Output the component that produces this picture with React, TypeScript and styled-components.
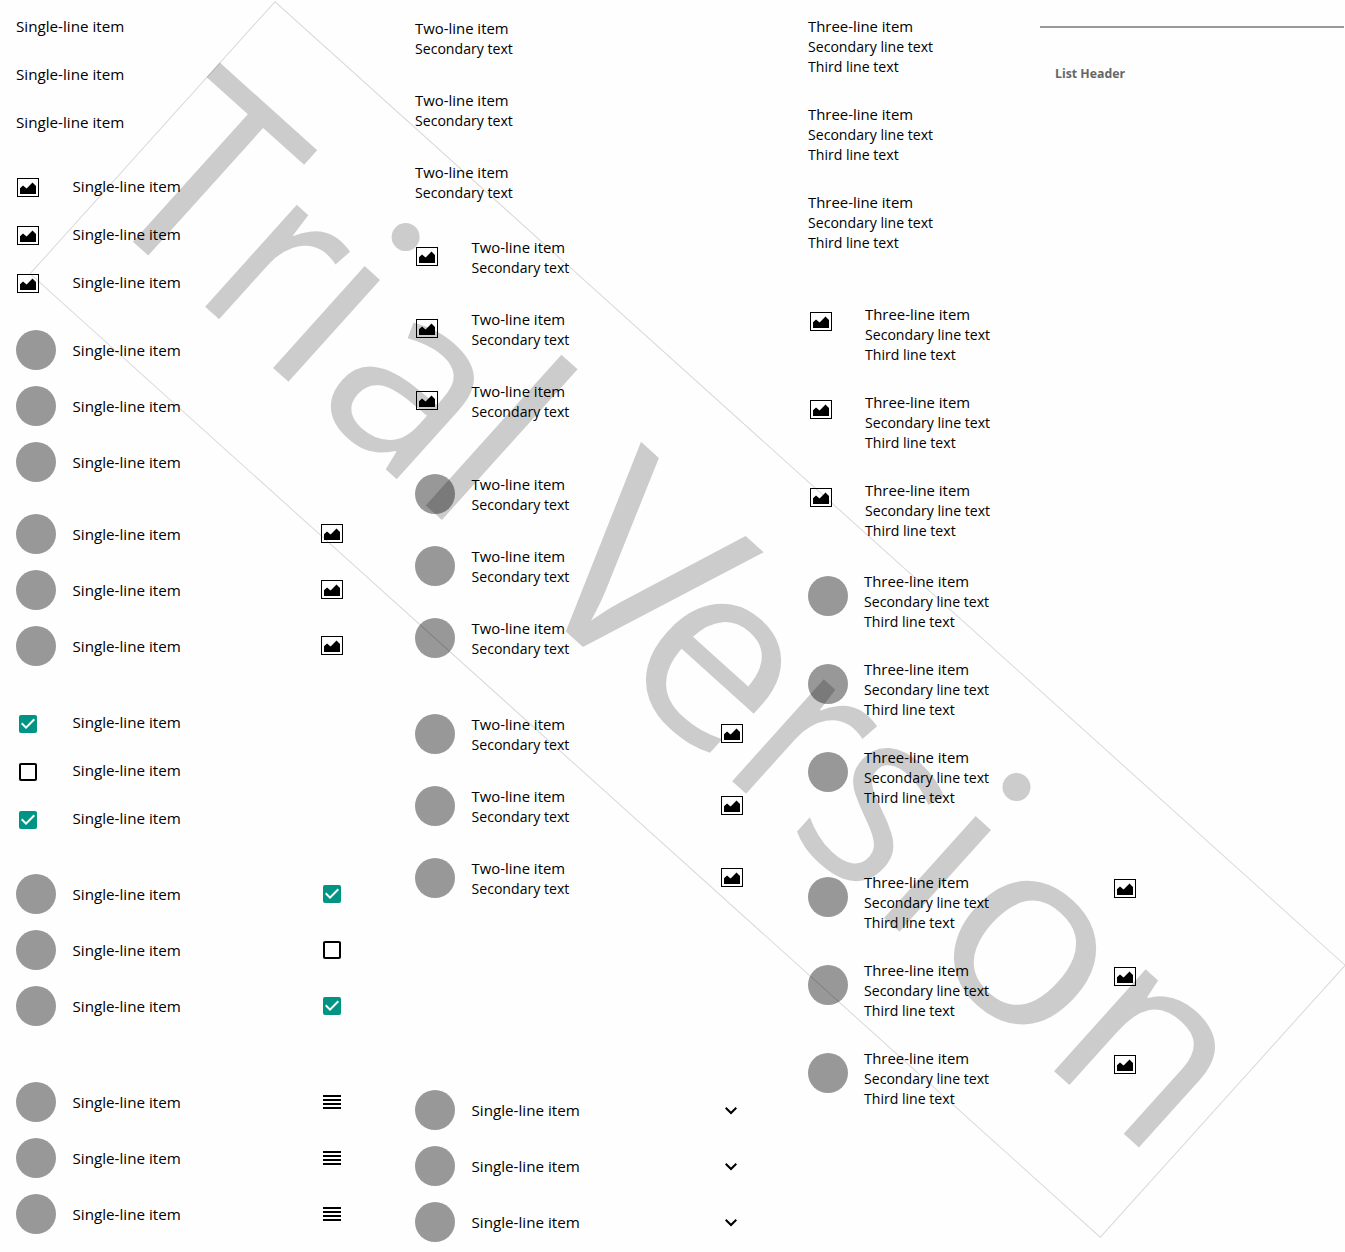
import React from 'react';
import styled, { createGlobalStyle } from 'styled-components';

const GlobalStyle = createGlobalStyle`
  *, *::before, *::after { box-sizing: border-box; }
  body {
    margin: 0;
    background: #fefefe;
    font-family: "Open Sans", "Noto Sans", sans-serif;
    color: #000;
  }
`;

const Page = styled.main`
  position: relative;
  display: flex;
  width: 1345px;
  height: 1252px;
  padding-top: 2px;
  overflow: hidden;
`;

const Column = styled.div<{ $width: number; $inset?: number }>`
  flex: none;
  width: ${p => p.$width}px;
  padding-left: ${p => p.$inset ?? 0}px;
`;

const TopBand = styled.div`
  display: flex;
`;

const List = styled.ul<{ $gap?: number; $width?: number }>`
  list-style: none;
  width: ${p => p.$width ?? 328}px;
  margin: ${p => p.$gap ?? 0}px 0 0;
  padding: 0;
`;

const Row = styled.li<{ $height: number }>`
  display: flex;
  align-items: center;
  height: ${p => p.$height}px;
`;

const Lead = styled.div<{ $width: number; $inset: number; $shift: number }>`
  display: flex;
  flex: none;
  width: ${p => p.$width}px;
  padding-left: ${p => p.$inset}px;
  transform: translateY(${p => p.$shift}px);
`;

const Trail = styled.div<{ $shift: number }>`
  display: flex;
  flex: none;
  justify-content: center;
  width: 24px;
  transform: translateY(${p => p.$shift}px);
`;

const Lines = styled.div`
  flex: 1;
  white-space: nowrap;
`;

const Primary = styled.div<{ $single: boolean }>`
  font-size: ${p => (p.$single ? 15.2 : 14.9)}px;
  line-height: 20px;
`;

const Secondary = styled.div`
  font-size: 14.1px;
  line-height: 20px;
  transform: translateY(1px);
`;

const Avatar = styled.span`
  width: 40px;
  height: 40px;
  border-radius: 50%;
  background: #989898;
`;

const Box = styled.span<{ $checked: boolean }>`
  display: flex;
  width: 18px;
  height: 18px;
  border-radius: 2px;
  border: ${p => (p.$checked ? 'none' : '2px solid #000')};
  background: ${p => (p.$checked ? '#009485' : 'transparent')};
`;

const Icon = styled.svg`
  display: block;
`;

const Aside = styled.aside`
  flex: 1;
  padding-top: 24px;
`;

const Divider = styled.hr`
  width: 304px;
  height: 2px;
  margin: 0;
  border: 0;
  background: #999;
`;

const ListHeader = styled.h2`
  margin: 36px 0 0 15px;
  font-size: 12.3px;
  line-height: 20px;
  font-weight: 700;
  color: #666;
`;

const Watermark = styled.div`
  position: absolute;
  top: 1px;
  left: 275px;
  display: flex;
  align-items: baseline;
  width: 1441px;
  height: 367px;
  border: 1px solid rgba(0, 0, 0, 0.15);
  transform: rotate(42deg);
  transform-origin: 0 0;
  line-height: 339.5px;
  color: rgba(0, 0, 0, 0.195);
  pointer-events: none;
`;

const Glyph = styled.span<{ $advance: number; $size: number; $stretch: number }>`
  position: relative;
  flex: none;
  width: ${p => p.$advance}px;
  font-size: ${p => p.$size}px;
  white-space: pre;
  transform: scaleX(${p => p.$stretch});
  transform-origin: 0 0;

  &:first-child { margin-left: -3px; }
`;

const DottedGlyph = styled(Glyph)`
  &::after {
    content: '';
    position: absolute;
    left: 18.8px;
    top: 68.6px;
    width: 28.4px;
    height: 28.4px;
    border-radius: 50%;
    background: rgba(0, 0, 0, 0.195);
  }
`;

const Stem = styled.span`
  display: block;
  clip-path: inset(119px 0 0 0);
`;

const PictureIcon = () => (
  <Icon width="22" height="20" viewBox="0 0 22 20">
    <rect x="0.5" y="0.5" width="21" height="18" fill="none" stroke="#000" />
    <path d="M3 16V10.2L6 7.4L9.6 10.6L15.5 4.6L19 8V16z" />
  </Icon>
);

const DragIcon = () => (
  <Icon width="18" height="14" viewBox="0 0 18 14">
    <path d="M0 0h18v2H0zM0 4h18v2H0zM0 8h18v2H0zM0 12h18v2H0z" />
  </Icon>
);

const ChevronIcon = () => (
  <Icon width="12" height="8" viewBox="0 0 12 8">
    <path d="M1.4 0L6 4.6L10.6 0L12 1.4L6 7.4L0 1.4z" />
  </Icon>
);

const Checkbox = ({ checked }: { checked: boolean }) => (
  <Box $checked={checked}>
    {checked && (
      <Icon width="18" height="18" viewBox="0 0 18 18">
        <path fill="#fff" d="M7 14L2 9l1.4-1.4L7 11.2l7.6-7.6L16 5z" />
      </Icon>
    )}
  </Box>
);

type Mark = 'avatar' | 'picture' | 'check' | 'drag' | 'chevron';

const MarkView = ({ kind, index }: { kind: Mark; index: number }) => {
  switch (kind) {
    case 'avatar': return <Avatar />;
    case 'picture': return <PictureIcon />;
    case 'check': return <Checkbox checked={index !== 1} />;
    case 'drag': return <DragIcon />;
    default: return <ChevronIcon />;
  }
};

const SINGLE = ['Single-line item'];
const DOUBLE = ['Two-line item', 'Secondary text'];
const TRIPLE = ['Three-line item', 'Secondary line text', 'Third line text'];

interface GroupProps {
  lines: string[];
  height: number;
  gap?: number;
  width?: number;
  lead?: Mark;
  leadWidth?: number;
  leadInset?: number;
  leadShift?: number;
  trail?: Mark;
  trailShift?: number;
}

const Group = ({
  lines, height, gap, width, lead, leadWidth = 56.5, leadInset = 0, leadShift = 0, trail, trailShift = 0,
}: GroupProps) => (
  <List $gap={gap} $width={width}>
    {[0, 1, 2].map(i => (
      <Row key={i} $height={height}>
        {lead && (
          <Lead $width={leadWidth} $inset={leadInset} $shift={leadShift}>
            <MarkView kind={lead} index={i} />
          </Lead>
        )}
        <Lines>
          <Primary $single={lines.length === 1}>{lines[0]}</Primary>
          {lines.slice(1).map(line => <Secondary key={line}>{line}</Secondary>)}
        </Lines>
        {trail && (
          <Trail $shift={trailShift}>
            <MarkView kind={trail} index={i} />
          </Trail>
        )}
      </Row>
    ))}
  </List>
);

const GLYPHS: [string, number, number, number][] = [
  ['T', 135.1, 268, 0.92],
  ['r', 89.1, 256, 0.9],
  ['i', 69.7, 256, 1],
  ['a', 134.8, 256, 0.975],
  ['l', 72, 267, 1],
  [' ', 68.2, 256, 1],
  ['V', 132.2, 268, 1.033],
  ['e', 142.5, 256, 1.025],
  ['r', 90.9, 256, 0.9],
  ['s', 111.8, 256, 0.91],
  ['i', 67.7, 256, 1],
  ['o', 161.3, 256, 1.065],
  ['n', 166, 256, 1],
];

export default function App() {
  return (
    <Page>
      <GlobalStyle />
      <Column $width={415} $inset={16}>
        <Group lines={SINGLE} height={48} />
        <Group lines={SINGLE} height={48} gap={16} lead="picture" leadInset={1} leadShift={2} />
        <Group lines={SINGLE} height={56} gap={16} lead="avatar" />
        <Group lines={SINGLE} height={56} gap={16} lead="avatar" trail="picture" />
        <Group lines={SINGLE} height={48} gap={24} lead="check" leadInset={3} leadShift={2} />
        <Group lines={SINGLE} height={56} gap={24} lead="avatar" trail="check" />
        <Group lines={SINGLE} height={56} gap={40} lead="avatar" trail="drag" />
      </Column>
      <Column $width={393}>
        <Group lines={DOUBLE} height={72} />
        <Group lines={DOUBLE} height={72} gap={3} lead="picture" leadInset={1} />
        <Group lines={DOUBLE} height={72} gap={21} lead="avatar" />
        <Group lines={DOUBLE} height={72} gap={24} width={329} lead="avatar" trail="picture" />
        <Group lines={SINGLE} height={56} gap={168} lead="avatar" trail="chevron" trailShift={1} />
      </Column>
      <Column $width={537}>
        <TopBand>
          <Group lines={TRIPLE} height={88} width={232} />
          <Aside>
            <Divider />
            <ListHeader>List Header</ListHeader>
          </Aside>
        </TopBand>
        <Group lines={TRIPLE} height={88} gap={24} lead="picture" leadWidth={57} leadInset={2} leadShift={-12} />
        <Group lines={TRIPLE} height={88} gap={3} lead="avatar" leadWidth={56} leadShift={-5} />
        <Group lines={TRIPLE} height={88} gap={37} width={329} lead="avatar" leadWidth={56} leadShift={-5} trail="picture" trailShift={-13} />
      </Column>
      <Watermark>
        {GLYPHS.map(([char, advance, size, stretch], i) => {
          const Part = char === 'i' ? DottedGlyph : Glyph;
          return (
            <Part key={i} $advance={advance} $size={size} $stretch={stretch}>
              {char === 'i' ? <Stem>{char}</Stem> : char}
            </Part>
          );
        })}
      </Watermark>
    </Page>
  );
}
